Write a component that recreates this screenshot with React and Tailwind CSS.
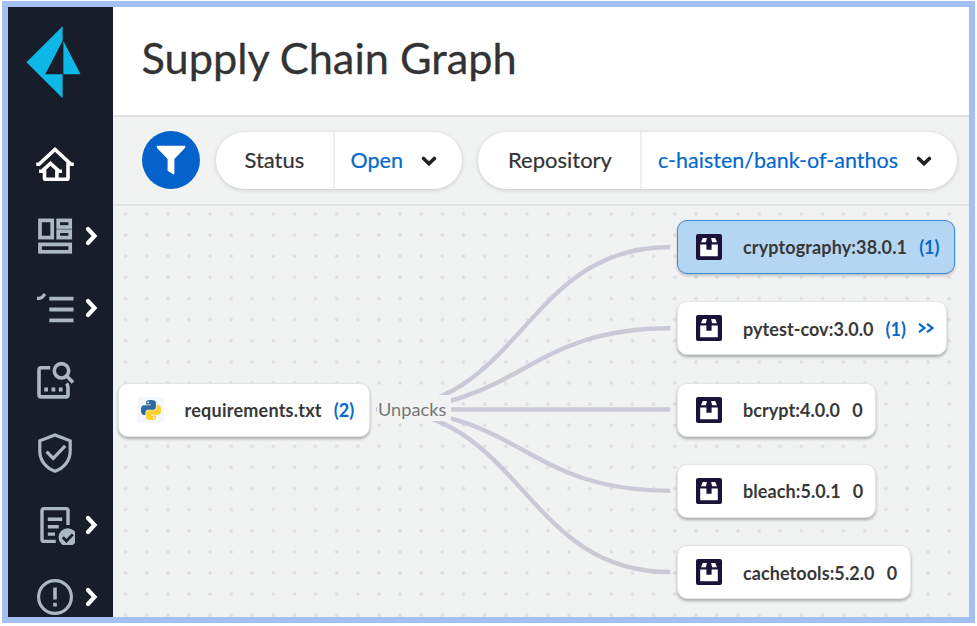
import React from "react";

const navItems = [
  { id: "home", active: true, expandable: false },
  { id: "dashboard", expandable: true },
  { id: "list", expandable: true },
  { id: "scan", expandable: false },
  { id: "shield", expandable: false },
  { id: "report", expandable: true },
  { id: "alert", expandable: true },
];

const glyphs = {
  home: (
    <g strokeWidth="3.6">
      <path d="M1.2 20.2H4L20 5.4L36 20.2H38.8M33 17.5V34.2Q33 35.2 32 35.2H10.5Q9.5 35.2 9.5 34.2V26" />
      <path d="M4 27.2H7L15.5 19.5L24 27.2H27M21.9 26.5V35" />
    </g>
  ),
  dashboard: (
    <g strokeWidth="3.7">
      <rect x="5" y="4.4" width="12.2" height="17.2" />
      <rect x="23.2" y="4.4" width="12" height="6.6" />
      <rect x="23.2" y="15.2" width="12" height="6.4" />
      <rect x="5" y="28.4" width="30.2" height="7.4" />
    </g>
  ),
  list: (
    <g strokeWidth="3.8">
      <path d="M14.3 10.6H38.5M14.3 21.5H38.5M14.3 32.4H38.5" />
      <path d="M2 10.4H4.6Q6.8 10.2 10 6" strokeWidth="3.2" />
    </g>
  ),
  scan: (
    <g strokeWidth="3.6">
      <path d="M15.2 6.8H6.2Q4 6.8 4 9V33.7Q4 35.9 6.2 35.9H30.8Q33 35.9 33 33.7V27Q33 24 31.6 22.4" />
      <circle cx="26.5" cy="9.8" r="7.2" />
      <path d="M31.7 15L38 21.5" />
      <path d="M9.2 28.5H13M16.5 28.5H20.3M23.8 28.5H27.6" strokeWidth="3.8" />
    </g>
  ),
  shield: (
    <g strokeWidth="3.2">
      <path d="M20 2L35.2 7.8V18C35.2 28 28.5 35.5 20 38.2C11.5 35.5 4.8 28 4.8 18V7.8Z" />
      <path d="M11.6 18.6L18.2 25.4L30.2 12.8" />
    </g>
  ),
  report: (
    <g strokeWidth="3.4">
      <path d="M20.8 36.4H9Q7 36.4 7 34.4V5.6Q7 3.6 9 3.6H31Q33 3.6 33 5.6V20" />
      <path d="M12.8 14.3H27.2M12.8 21.7H23.8M12.8 29.1H20" />
      <circle cx="32.7" cy="32.3" r="9.1" fill="currentColor" stroke="none" />
      <path d="M27.8 32.3L31.4 36L37.8 29.4" stroke="#171e29" strokeWidth="2.8" />
    </g>
  ),
  alert: (
    <g strokeWidth="3.2">
      <circle cx="20" cy="20" r="16.4" />
      <path d="M20 10.6V22.4M20 25.8V29.4" strokeWidth="3.6" />
    </g>
  ),
};

function NavIcon({ id }) {
  return (
    <svg viewBox="0 0 40 40" className="h-10 w-10 shrink-0" fill="none" stroke="currentColor">
      {glyphs[id]}
    </svg>
  );
}

function Logo() {
  return (
    <svg viewBox="0 0 56 74" className="ml-[18px] h-[74px] w-14" fill="#0db8e6">
      <path d="M.5 37.3L36.6 1.3V15.8L19.2 49.2H36.6V73.2Z" />
      <path d="M37.4 16L54.6 49.2H37.4Z" />
    </svg>
  );
}

function Caret() {
  return (
    <svg viewBox="0 0 16 12" className="h-3 w-4 shrink-0" fill="none" stroke="#222" strokeWidth="3.6">
      <path d="M2.6 4.5L8 9.7L13.4 4.5" strokeLinecap="round" />
    </svg>
  );
}

function PackageIcon() {
  return (
    <svg viewBox="0 0 26 26" className="h-[26px] w-[26px] shrink-0">
      <rect width="26" height="26" rx="2" fill="#1b1239" />
      <path d="M6.8 4H10.9L9.9 8.2H5ZM15.1 4H19.2L21 8.2H16.1Z" fill="#fff" />
      <path d="M4.2 10.6H10.4V15.8H15.6V10.6H21.8V22.2H4.2Z" fill="#fff" />
    </svg>
  );
}

function PythonIcon() {
  return (
    <span className="flex h-[26px] w-[26px] shrink-0 items-center justify-center bg-[#f4f7fd]">
      <svg viewBox="0 0 24 24" className="h-5 w-5">
        <path
          fill="#2d6b9f"
          d="M14.25.18l.9.2.73.26.59.3.45.32.34.34.25.34.16.33.1.3.04.26.02.2-.01.13V8.5l-.05.63-.13.55-.21.46-.26.38-.3.31-.33.25-.35.19-.35.14-.33.1-.3.07-.26.04-.21.02H8.77l-.69.05-.59.14-.5.22-.41.27-.33.32-.27.35-.2.36-.15.37-.1.35-.07.32-.04.27-.02.21v3.06H3.17l-.21-.03-.28-.07-.32-.12-.35-.18-.36-.26-.36-.36-.35-.46-.32-.59-.28-.73-.21-.88-.14-1.05-.05-1.23.06-1.22.16-1.04.24-.87.32-.71.36-.57.4-.44.42-.33.42-.24.4-.16.36-.1.32-.05.24-.01h.16l.06.01h8.16v-.83H6.18l-.01-2.75-.02-.37.05-.34.11-.31.17-.28.25-.26.31-.23.38-.2.44-.18.51-.15.58-.12.64-.1.71-.06.77-.04.84-.02 1.27.05zm-6.3 1.98l-.23.33-.08.41.08.41.23.34.33.22.41.09.41-.09.33-.22.23-.34.08-.41-.08-.41-.23-.33-.33-.22-.41-.09-.41.09z"
        />
        <path
          fill="#fdd02f"
          d="M21.04 6.11l.28.06.32.12.35.18.36.27.36.35.35.47.32.59.28.73.21.88.14 1.04.05 1.23-.06 1.23-.16 1.04-.24.86-.32.71-.36.57-.4.45-.42.33-.42.24-.4.16-.36.09-.32.05-.24.02-.16-.01h-8.22v.82h5.84l.01 2.76.02.36-.05.34-.11.31-.17.29-.25.25-.31.24-.38.2-.44.17-.51.15-.58.13-.64.09-.71.07-.77.04-.84.01-1.27-.04-1.07-.14-.9-.2-.73-.25-.59-.3-.45-.33-.34-.34-.25-.34-.16-.33-.1-.3-.04-.25-.02-.2.01-.13v-5.34l.05-.64.13-.54.21-.46.26-.38.3-.32.33-.24.35-.2.35-.14.33-.1.3-.06.26-.04.21-.02.13-.01h5.84l.69-.05.59-.14.5-.21.41-.28.33-.32.27-.35.2-.36.15-.36.1-.35.07-.32.04-.28.02-.21V6.07h2.09l.14.01z"
        />
        <circle cx="15.4" cy="21.1" r="1.1" fill="#fff" />
      </svg>
    </span>
  );
}

function Sidebar() {
  return (
    <aside className="w-[105px] shrink-0 overflow-hidden bg-[#171e29]">
      <div className="h-[121px] pt-[18px]">
        <Logo />
      </div>
      <nav>
        {navItems.map((item) => (
          <div
            key={item.id}
            className={`flex h-[72.2px] items-center gap-[8.5px] pl-[27px] ${item.active ? "text-white" : "text-[#abb7c4]"}`}
          >
            <NavIcon id={item.id} />
            {item.expandable && (
              <svg viewBox="0 0 16 20" className="h-5 w-4 text-white" fill="none" stroke="currentColor">
                <path d="M4 3L10.5 10L4 17" strokeWidth="4.2" strokeLinecap="round" />
              </svg>
            )}
          </div>
        ))}
      </nav>
    </aside>
  );
}

function FilterPill({ label, value, className, labelClass }) {
  return (
    <div
      className={`flex h-[57px] overflow-hidden rounded-full bg-white text-[21.5px] shadow-[0_1px_4px_rgba(0,0,0,0.18)] [-webkit-text-stroke:0.2px] ${className}`}
    >
      <div className={`flex items-center border-r-2 border-[#eeefef] pb-0.5 text-[22px] text-[#333] ${labelClass}`}>
        {label}
      </div>
      <div className="flex flex-1 items-center gap-[18px] pl-4 text-[#0468cd]">
        {value}
        <Caret />
      </div>
    </div>
  );
}

const packages = [
  {
    name: "cryptography:38.0.1",
    count: "(1)",
    linked: true,
    selected: true,
    box: "top-[13.5px] w-[278px]",
    tracking: "tracking-[0.13px]",
  },
  {
    name: "pytest-cov:3.0.0",
    count: "(1)",
    linked: true,
    more: true,
    box: "top-[95px] w-[270px]",
    tracking: "tracking-[0.06px]",
  },
  { name: "bcrypt:4.0.0", count: "0", box: "top-[176.5px] w-[199px]", tracking: "tracking-[0.06px]" },
  { name: "bleach:5.0.1", count: "0", box: "top-[257.5px] w-[199px]", tracking: "tracking-[0.08px]" },
  { name: "cachetools:5.2.0", count: "0", box: "top-[339px] w-[234px]", tracking: "tracking-[0.08px]" },
];

function Node({ icon, name, count, linked, selected, more, box, tracking }) {
  return (
    <div
      className={`absolute flex h-[54px] items-center rounded-[10px] border pl-[18.5px] text-[18px] font-bold whitespace-nowrap text-[#383838] ${
        selected
          ? "border-[#3c8ad9] bg-[#b5d6f2] shadow-[0_2px_3px_rgba(0,0,0,0.2)]"
          : "border-[#e4e5e5] bg-white shadow-[0_2px_3px_rgba(0,0,0,0.3)]"
      } ${box}`}
    >
      {icon}
      <span className={`ml-[21px] pt-0.5 ${tracking}`}>{name}</span>
      <span className={`ml-3 pt-0.5 ${linked ? "text-[#0468cd]" : ""}`}>{count}</span>
      {more && (
        <svg viewBox="0 0 16 10" className="ml-3 h-2.5 w-4" fill="none" stroke="#0468cd" strokeWidth="2.2">
          <path d="M1 .8L6.4 5L1 9.2M9 .8L14.4 5L9 9.2" />
        </svg>
      )}
    </div>
  );
}

function Canvas() {
  const targets = [41, 122.3, 203.5, 284.7, 366];
  return (
    <div className="relative flex-1 overflow-hidden bg-[#f1f3f3]">
      <svg className="absolute inset-0 h-full w-full" fill="none">
        <defs>
          <pattern id="dots" x="2" y="-2.7" width="21.12" height="21.12" patternUnits="userSpaceOnUse">
            <circle cx="10.56" cy="10.56" r="1.8" fill="#e1dbdf" />
          </pattern>
        </defs>
        <rect width="100%" height="100%" fill="url(#dots)" />
        {targets.map((y) => (
          <path key={y} d={`M263.2 203.5C410 203.5 410 ${y} 557.3 ${y}`} stroke="#cbc9d5" strokeWidth="4.4" />
        ))}
      </svg>
      <div className="absolute top-[189px] left-[263.5px] flex h-[26px] w-[74px] items-center bg-[#f1f3f3] pt-1 pl-[1.5px] text-[18.2px] text-[#777]">
        Unpacks
      </div>
      <Node
        icon={<PythonIcon />}
        name="requirements.txt"
        count="(2)"
        linked
        box="top-[176.5px] left-[5px] w-[252px]"
        tracking="tracking-[0.24px]"
      />
      {packages.map((p) => (
        <Node key={p.name} icon={<PackageIcon />} {...p} box={`left-[563.5px] ${p.box}`} />
      ))}
    </div>
  );
}

export default function App() {
  return (
    <div className="h-[626px] w-[977px] bg-white pt-px pl-0.5 font-['Lato',sans-serif]">
      <div className="flex h-[622px] w-[973px] overflow-hidden border-6 border-[#a4c0f3]">
        <Sidebar />
        <main className="flex min-w-0 flex-1 flex-col">
          <header className="flex h-[110px] items-center border-b-2 border-[#dfe1e1] bg-white pb-2 pl-[28.5px]">
            <h1 className="text-[43.3px] text-[#333] [-webkit-text-stroke:0.3px]">Supply Chain Graph</h1>
          </header>
          <section className="flex h-[89px] items-center border-b-2 border-[#dfe1e1] bg-[#f1f3f3] pb-px pl-[29px]">
            <button className="flex h-[58px] w-[58px] shrink-0 items-center justify-center rounded-full bg-[#0462ca]">
              <svg viewBox="0 0 30 30" className="h-[30px] w-[30px]" fill="#fff">
                <path d="M1.5.8H28.5Q29.5.8 29.3 1.8L28.5 3.6L18.4 14V28.5Q18.2 29.8 17 29.3L11.6 25.7V14L1.5 3.6L.7 1.8Q.5.8 1.5.8Z" />
              </svg>
            </button>
            <FilterPill label="Status" value="Open" className="ml-[15.5px] w-[246.5px]" labelClass="w-[119px] pl-[29px]" />
            <FilterPill
              label="Repository"
              value="c-haisten/bank-of-anthos"
              className="ml-4 w-[479px]"
              labelClass="w-[164px] pl-[30px]"
            />
          </section>
          <Canvas />
        </main>
      </div>
    </div>
  );
}
